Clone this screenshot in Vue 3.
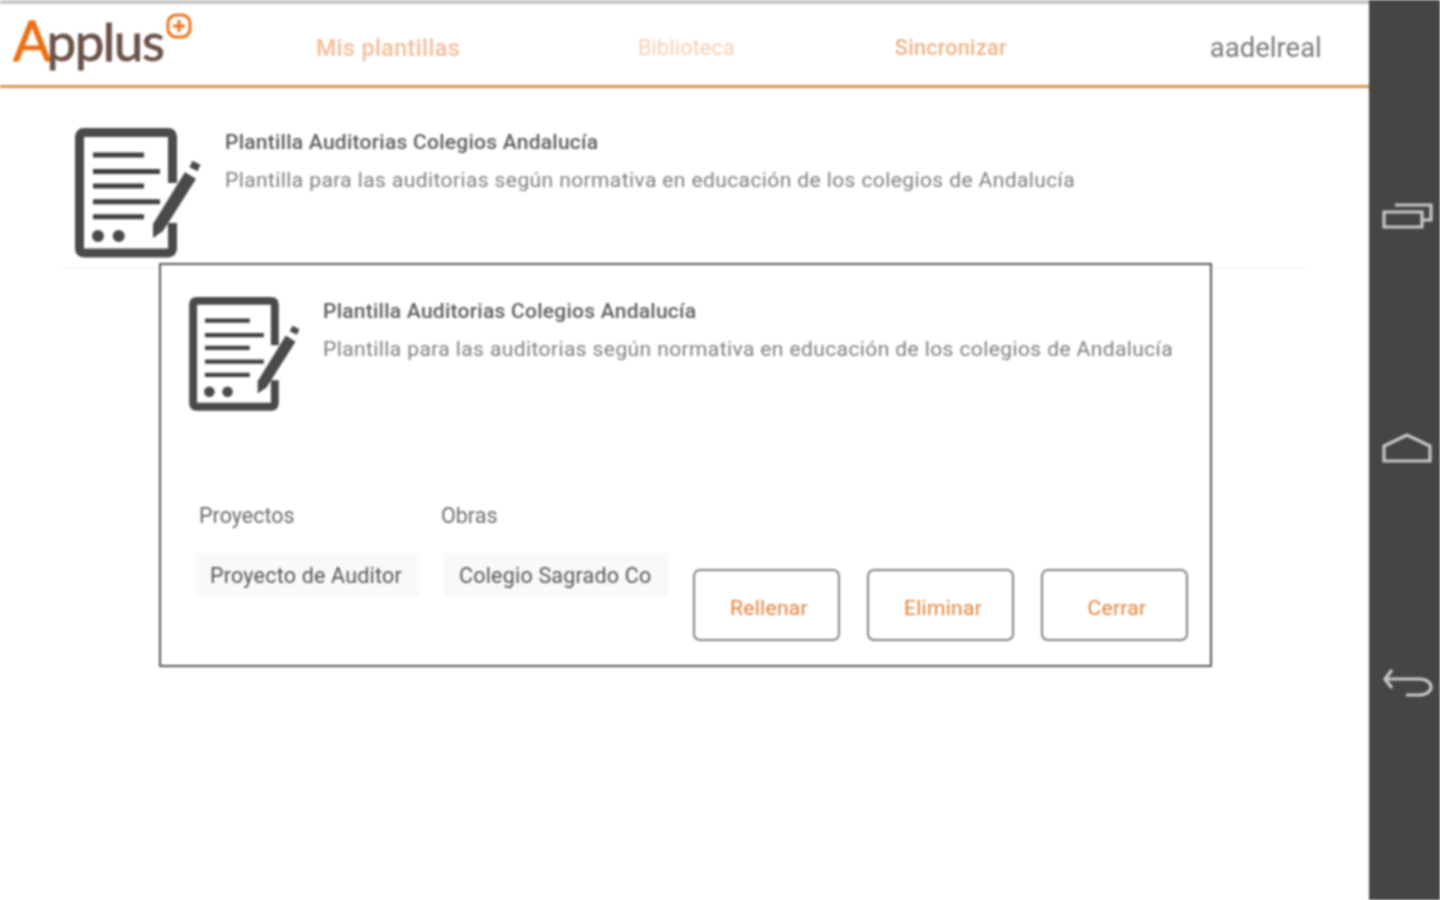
<template>
  <div class="screen">
    <svg class="defs" width="0" height="0">
      <symbol id="doc" viewBox="0 0 126 132">
        <path d="M97.5 56V10Q97.5 5.5 93 5.5H9Q4.5 5.5 4.5 10V121.5Q4.5 126 9 126H93Q97.5 126 97.5 121.5V96" fill="none" stroke="#4a4a4a" stroke-width="9" />
        <path d="M18 28H69M18 44.5H85M18 59H69M18 74.7H85M18 89.7H69" stroke="#404040" stroke-width="5" />
        <circle cx="23" cy="109" r="6" fill="#4a4a4a" />
        <circle cx="43.7" cy="109" r="6" fill="#4a4a4a" />
        <path d="M78 111L78 97L110 45L121 52L88 104Z" fill="#4a4a4a" />
        <path d="M116 37L124 41" stroke="#4a4a4a" stroke-width="7" />
      </symbol>
    </svg>

    <div class="main">
      <header class="header">
        <div class="logo">
          <span class="logo-a">A</span><span class="logo-rest">pplus</span>
          <svg class="logo-plus" width="26" height="26" viewBox="0 0 26 26">
            <rect x="2" y="2" width="22" height="22" rx="8" fill="none" stroke="#ee7420" stroke-width="3" />
            <path d="M13 7V19M7 13H19" stroke="#ee7420" stroke-width="3" />
          </svg>
        </div>
        <a class="nav nav-current">Mis plantillas</a>
        <a class="nav nav-library">Biblioteca</a>
        <a class="nav nav-sync">Sincronizar</a>
        <span class="user">aadelreal</span>
      </header>

      <div class="row">
        <svg class="row-icon"><use href="#doc" /></svg>
        <div class="row-text">
          <div class="title">{{ template.title }}</div>
          <div class="desc">{{ template.desc }}</div>
        </div>
      </div>

      <div class="modal">
        <div class="modal-top">
          <svg class="modal-icon"><use href="#doc" /></svg>
          <div class="modal-text">
            <div class="title">{{ template.title }}</div>
            <div class="desc">{{ template.desc }}</div>
          </div>
        </div>
        <div class="modal-bottom">
          <div class="field">
            <label class="field-label">Proyectos</label>
            <div class="select">Proyecto de Auditor</div>
          </div>
          <div class="field field-second">
            <label class="field-label">Obras</label>
            <div class="select">Colegio Sagrado Co</div>
          </div>
          <div class="actions">
            <button v-for="action in actions" :key="action" class="btn">{{ action }}</button>
          </div>
        </div>
      </div>
    </div>

    <aside class="sidebar">
      <svg class="soft-key" viewBox="0 0 52 28">
        <path d="M3 9H41V24H3Z" />
        <path d="M14 2H50V17H41" />
      </svg>
      <svg class="soft-key" viewBox="0 0 52 28">
        <path d="M3 12L26 1L49 12V27H3Z" />
      </svg>
      <svg class="soft-key soft-key-back" viewBox="0 0 52 28">
        <path d="M11 2L4 11L11 20" />
        <path d="M4 11H38C54 11 54 27 38 27H25" />
      </svg>
    </aside>
  </div>
</template>

<script setup>
const template = {
  title: 'Plantilla Auditorias Colegios Andalucía',
  desc: 'Plantilla para las auditorias según normativa en educación de los colegios de Andalucía',
};
const actions = ['Rellenar', 'Eliminar', 'Cerrar'];
</script>

<style>
html,
body {
  background: #fff;
  overflow: hidden;
}
</style>

<style scoped>
.screen {
  display: flex;
  width: 1440px;
  height: 900px;
  font-family: Roboto, 'Liberation Sans', sans-serif;
  filter: blur(0.8px);
}

.defs {
  position: absolute;
}

.main {
  position: relative;
  width: 1369px;
  flex: none;
}

.header {
  display: flex;
  align-items: center;
  height: 88px;
  box-sizing: border-box;
  padding-left: 13px;
  border-top: 4px solid #c8c8c8;
  border-bottom: 3px solid #e0934f;
}

.logo {
  position: relative;
  width: 303px;
  flex: none;
  margin-top: -8px;
  font-family: Lato, Roboto, sans-serif;
  font-size: 56px;
  line-height: 60px;
  letter-spacing: -1.5px;
  white-space: nowrap;
  -webkit-text-stroke: 0.8px currentColor;
}

.logo-a {
  color: #ee6f12;
}

.logo-rest {
  color: #6b5249;
  margin-left: -3px;
  font-size: 53px;
}

.logo-plus {
  position: absolute;
  left: 153px;
  top: 3px;
}

.nav {
  font-size: 21.5px;
  font-weight: 500;
  white-space: nowrap;
}

.nav-current {
  color: #f2bd98;
  font-size: 23px;
  letter-spacing: 0.5px;
  margin-top: 8px;
}

.nav-library {
  color: #f6cfb0;
  margin-left: 178px;
  font-weight: 400;
  letter-spacing: 0.2px;
  margin-top: 5px;
}

.nav-sync {
  color: #f0b285;
  margin-left: 160px;
  letter-spacing: 0.3px;
  margin-top: 5px;
}

.user {
  margin-left: 203px;
  color: #7a7a7a;
  font-size: 27.5px;
  margin-top: 5px;
}

.row {
  display: flex;
  height: 181px;
  box-sizing: border-box;
  margin: 0 59px 0 60px;
  padding: 39px 0 0 15px;
  border-bottom: 1px solid #f6f6f6;
}

.row-icon {
  width: 126px;
  height: 132px;
  flex: none;
}

.row-text {
  margin-left: 24px;
  padding-top: 3px;
}

.title {
  color: #5c5c5c;
  font-size: 21px;
  font-weight: 500;
  line-height: 24px;
  letter-spacing: 0.25px;
  white-space: nowrap;
}

.desc {
  margin-top: 14px;
  color: #7e7e7e;
  font-size: 21px;
  line-height: 24px;
  letter-spacing: 0.4px;
  white-space: nowrap;
}

.modal {
  position: absolute;
  left: 159px;
  top: 263px;
  width: 1053px;
  height: 404px;
  box-sizing: border-box;
  display: flex;
  flex-direction: column;
  justify-content: space-between;
  padding: 31px 22px 24px 28px;
  background: #fff;
  border: 2px solid #555;
}

.modal-top {
  display: flex;
}

.modal-icon {
  width: 111px;
  height: 116px;
  flex: none;
}

.modal-text {
  margin-left: 23px;
  padding-top: 3px;
}

.modal-bottom {
  display: flex;
  align-items: flex-end;
}

.field {
  width: 224px;
  flex: none;
  margin-left: 6px;
  margin-bottom: 44px;
}

.field-second {
  margin-left: 25px;
}

.field-second .field-label {
  margin-left: -3px;
}

.field-label {
  display: block;
  margin: 0 0 25px 4px;
  color: #6a6a6a;
  font-size: 21.5px;
  line-height: 24px;
}

.select {
  height: 44px;
  box-sizing: border-box;
  padding-left: 15px;
  background: #f8f9fb;
  color: #555;
  font-size: 21.5px;
  letter-spacing: 0.2px;
  line-height: 46px;
  white-space: nowrap;
  overflow: hidden;
}

.actions {
  display: flex;
  gap: 27px;
  margin-left: 25px;
}

.btn {
  width: 147px;
  height: 72px;
  padding: 5px 0 0 5px;
  background: #fff;
  border: 2px solid #808080;
  border-radius: 7px;
  color: #e57f33;
  font-family: inherit;
  font-size: 21px;
  letter-spacing: 0.3px;
}

.sidebar {
  flex: 1;
  display: flex;
  flex-direction: column;
  gap: 203px;
  box-sizing: border-box;
  padding: 203px 0 0 12px;
  background: #454545;
}

.soft-key {
  width: 52px;
  height: 28px;
  flex: none;
  fill: none;
  stroke: #c8c8c8;
  stroke-width: 3.2;
  overflow: visible;
}

.soft-key-back {
  margin-top: 3px;
}
</style>
